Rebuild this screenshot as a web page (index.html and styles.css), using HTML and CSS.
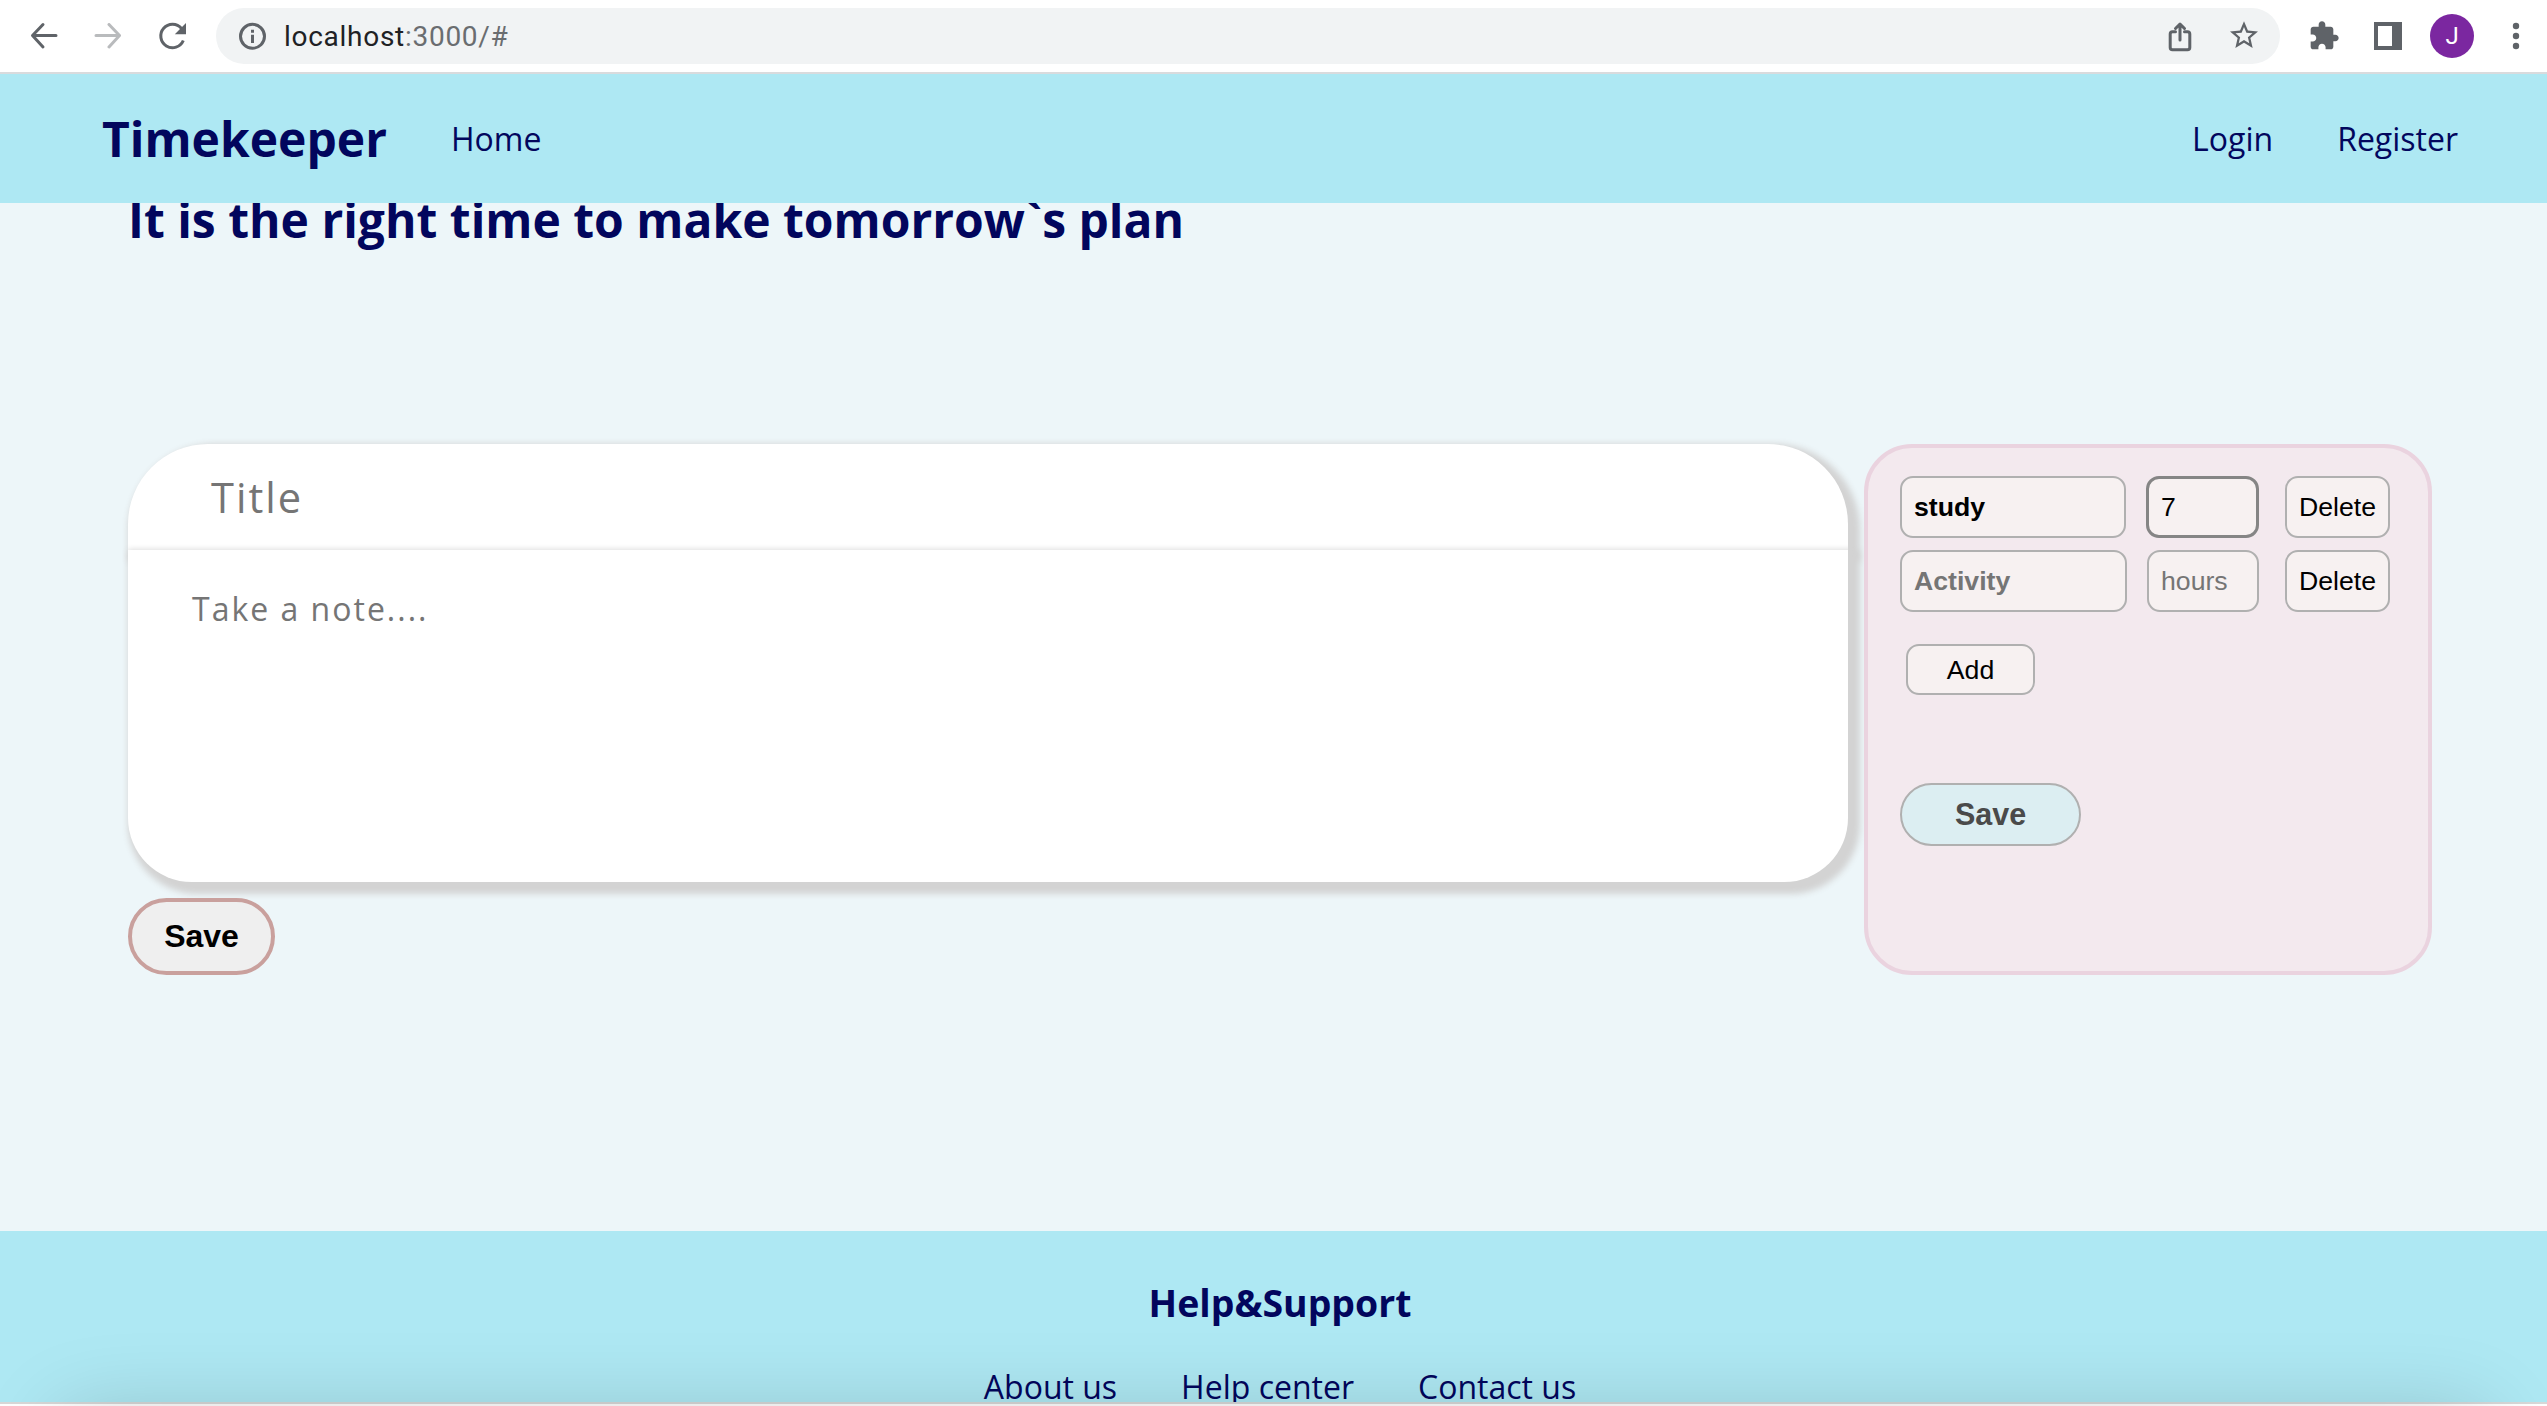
FILE: index.html
```html
<!DOCTYPE html>
<html lang="en">
<head>
<meta charset="utf-8">
<title>Timekeeper</title>
<link rel="stylesheet" href="styles.css">
</head>
<body>
<div class="window">
  <div class="toolbar">
    <svg class="icon" viewBox="0 0 40 40"><path class="stroke" d="M32 19.500H9M19 8.500L8.500 19.500L19 31" /></svg>
    <svg class="icon faded" viewBox="0 0 40 40"><path class="stroke" d="M8 19.500H31M21 8.500L31.500 19.500L21 31" /></svg>
    <svg class="icon" viewBox="0 0 40 40"><path class="stroke butt" d="M29.500 12.500A11.700 11.700 0 1 0 31.300 24.500" /><path d="M34 7V18.200H22.800Z" /></svg>
    <div class="address">
      <svg class="icon" viewBox="0 0 40 40"><circle class="stroke" cx="20.500" cy="20.300" r="12" /><path d="M19 18.800h3v8.200h-3zM19 13.800h3v3h-3z" /></svg>
      <span class="url">localhost<span class="port">:3000/#</span></span>
      <svg class="icon" viewBox="0 0 40 40"><path class="stroke" d="M15.500 15.800H12.500a2.300 2.300 0 0 0-2.300 2.300V31.500a2.300 2.300 0 0 0 2.300 2.300H27.500a2.300 2.300 0 0 0 2.300-2.300V18.100a2.300 2.300 0 0 0-2.300-2.300H24.500M20 24V8.500M15.500 12.500L20 8L24.500 12.500" /></svg>
      <svg class="icon" viewBox="0 0 40 40"><path transform="translate(3.200 2.500) scale(1.400)" d="M22 9.240l-7.190-.62L12 2 9.190 8.630 2 9.240l5.460 4.730L5.820 21 12 17.270 18.180 21l-1.630-7.030L22 9.240zM12 15.400l-3.760 2.270 1-4.280-3.320-2.880 4.380-.38L12 6.100l1.710 4.040 4.380.38-3.320 2.880 1 4.280L12 15.400z" /></svg>
    </div>
    <svg class="icon" viewBox="0 0 40 40"><path transform="translate(4 4) scale(1.333)" d="M20.500 11H19V7c0-1.100-.9-2-2-2h-4V3.500C13 2.120 11.880 1 10.500 1S8 2.120 8 3.500V5H4c-1.100 0-1.990.9-1.990 2v3.800H3.500c1.490 0 2.700 1.210 2.700 2.700s-1.210 2.700-2.700 2.700H2V20c0 1.100.9 2 2 2h3.800v-1.500c0-1.490 1.210-2.700 2.700-2.700 1.490 0 2.700 1.210 2.700 2.700V22H17c1.100 0 2-.9 2-2v-4h1.500c1.380 0 2.500-1.120 2.500-2.500S21.880 11 20.500 11z" /></svg>
    <svg class="icon" viewBox="0 0 40 40"><path fill-rule="evenodd" d="M6 6H34V34H6ZM10 10V30H24V10Z" /></svg>
    <div class="avatar">J</div>
    <svg class="icon" viewBox="0 0 40 40"><circle cx="20" cy="10" r="3.200" /><circle cx="20" cy="20" r="3.200" /><circle cx="20" cy="30" r="3.200" /></svg>
  </div>

  <nav class="nav">
    <span class="brand">Timekeeper</span>
    <span class="link">Home</span>
    <span class="link login">Login</span>
    <span class="link">Register</span>
  </nav>

  <main class="main">
    <h1 class="heading">It is the right time to make tomorrow`s plan</h1>
    <div class="columns">
      <section class="note">
        <div class="note-title">Title</div>
        <div class="note-body">Take a note....</div>
        <button class="note-save">Save</button>
      </section>
      <section class="plan">
        <div class="row">
          <div class="field activity filled">study</div>
          <div class="field hours focused">7</div>
          <button class="field delete">Delete</button>
        </div>
        <div class="row">
          <div class="field activity">Activity</div>
          <div class="field hours">hours</div>
          <button class="field delete">Delete</button>
        </div>
        <button class="field add">Add</button>
        <button class="plan-save">Save</button>
      </section>
    </div>
  </main>

  <footer class="footer">
    <h2 class="support">Help&amp;Support</h2>
    <div class="footer-links">
      <span class="link">About us</span>
      <span class="link">Help center</span>
      <span class="link">Contact us</span>
    </div>
  </footer>
  <div class="edge"></div>
  <div class="shade"></div>
</div>
</body>
</html>
```

FILE: styles.css
```css
* {
  box-sizing: border-box;
}

body {
  margin: 0;
  font-family: "Open Sans", "Noto Sans", sans-serif;
  color: #02065d;
}

.window {
  position: relative;
  display: flex;
  flex-direction: column;
  width: 2547px;
  height: 1406px;
  overflow: hidden;
  background: #edf6f9;
}

.toolbar {
  display: flex;
  align-items: center;
  gap: 24px;
  flex: none;
  height: 74px;
  padding: 0 11px 0 24px;
  background: #fff;
  border-bottom: 2px solid #d9dbdd;
}

.icon {
  flex: none;
  width: 40px;
  height: 40px;
  fill: #5f6368;
}

.icon .stroke {
  fill: none;
  stroke: #5f6368;
  stroke-width: 3;
  stroke-linecap: round;
  stroke-linejoin: round;
}

.icon .butt {
  stroke-linecap: butt;
}

.faded {
  opacity: 0.43;
}

.address {
  display: flex;
  align-items: center;
  gap: 24px;
  flex: 1;
  height: 56px;
  padding: 0 16px;
  border-radius: 28px;
  background: #f1f3f4;
}

.url {
  flex: 1;
  margin-left: -12px;
  padding-top: 1px;
  font: 28px/40px Roboto, sans-serif;
  letter-spacing: 0.720px;
  color: #202124;
}

.port {
  color: #6a6d70;
}

.avatar {
  width: 44px;
  height: 44px;
  margin: 0 -2px;
  border-radius: 50%;
  background: #7b27a0;
  color: #fff;
  font: 24px/44px Roboto, sans-serif;
  text-align: center;
}

.nav {
  position: relative;
  z-index: 1;
  display: flex;
  align-items: center;
  gap: 64px;
  flex: none;
  height: 129px;
  padding: 0 89px 0 102px;
  background: #aee8f3;
}

.brand {
  font-size: 48px;
  font-weight: 700;
}

.link {
  font-size: 32px;
}

.login {
  margin-left: auto;
}

.main {
  flex: none;
  height: 1028px;
  padding: 0 115px 0 128px;
}

.heading {
  height: 65px;
  margin: -16px 0 192px;
  font-size: 48px;
  line-height: 65px;
  font-weight: 700;
}

.columns {
  display: flex;
  gap: 16px;
  height: 531px;
}

.note {
  display: flex;
  flex-direction: column;
  align-items: flex-start;
  width: 1720px;
}

.note-title,
.note-body {
  width: 100%;
  background: #fff;
  box-shadow: 6px 6px 6px 6px #d3d3d3;
  color: #757575;
  letter-spacing: 2px;
}

.note-title {
  height: 105.500px;
  padding-left: 83px;
  border-radius: 80px 80px 0 0;
  font-size: 41.600px;
  line-height: 107px;
}

.note-body {
  height: 332.500px;
  padding: 37px 64px;
  border-radius: 0 0 64px 64px;
  font-size: 32px;
  line-height: 44px;
}

.note-save,
.plan-save {
  padding: 0;
  font-family: "Liberation Sans", Arial, sans-serif;
  font-weight: 700;
}

.note-save {
  position: relative;
  width: 147px;
  height: 77px;
  margin-top: 16px;
  border: 4px solid #c9a09d;
  border-radius: 40px;
  background: #efefef;
  color: #000;
  font-size: 32px;
}

.plan {
  position: relative;
  display: flex;
  flex-direction: column;
  align-items: flex-start;
  width: 568px;
  padding: 28px 32px;
  border: 4px solid #ead3df;
  border-radius: 48px;
  background: #f3e9ee;
}

.row {
  display: flex;
  width: 490px;
  margin-bottom: 12px;
}

.field {
  height: 62px;
  padding: 0 12px;
  border: 2px solid #b0b0b0;
  border-radius: 13px;
  background: #f7f1f1;
  color: #000;
  font: 26.670px/59px "Liberation Sans", Arial, sans-serif;
}

.activity {
  width: 227px;
  color: #757575;
  font-weight: 700;
}

.filled {
  width: 226px;
  color: #000;
}

.hours {
  width: 112px;
  margin-left: auto;
  margin-right: 26px;
  color: #757575;
}

.focused {
  width: 113px;
  border: 3px solid #858585;
  line-height: 57px;
  color: #000;
}

.delete {
  width: 105px;
  padding: 0;
}

.add {
  width: 129px;
  height: 51px;
  margin: 20px 0 0 6px;
  padding: 0;
  line-height: 46px;
}

.plan-save {
  width: 181px;
  height: 63px;
  margin-top: 88px;
  border: 2px solid #b0b0b0;
  border-radius: 32px;
  background: #dceef2;
  color: #4a4a4a;
  font-size: 30.500px;
}

.footer {
  display: flex;
  flex-direction: column;
  align-items: center;
  flex: none;
  height: 171px;
  padding: 46px 0 0 13px;
  overflow: hidden;
  background: #aee8f3;
}

.support {
  margin: 0;
  font-size: 37.440px;
  line-height: 52px;
  font-weight: 700;
}

.footer-links {
  display: flex;
  gap: 64px;
  margin-top: 36px;
  line-height: 44px;
}

.edge {
  flex: none;
  height: 4px;
  border-top: 2px solid #d8d8d8;
  background: #fff;
}

/* soft shadow rising from the bottom edge of the window */
.shade {
  position: absolute;
  left: 60px;
  right: 60px;
  top: 1414px;
  height: 200px;
  border-radius: 20px;
  box-shadow: 0 0 84px rgba(0, 0, 0, 0.180);
}
```
